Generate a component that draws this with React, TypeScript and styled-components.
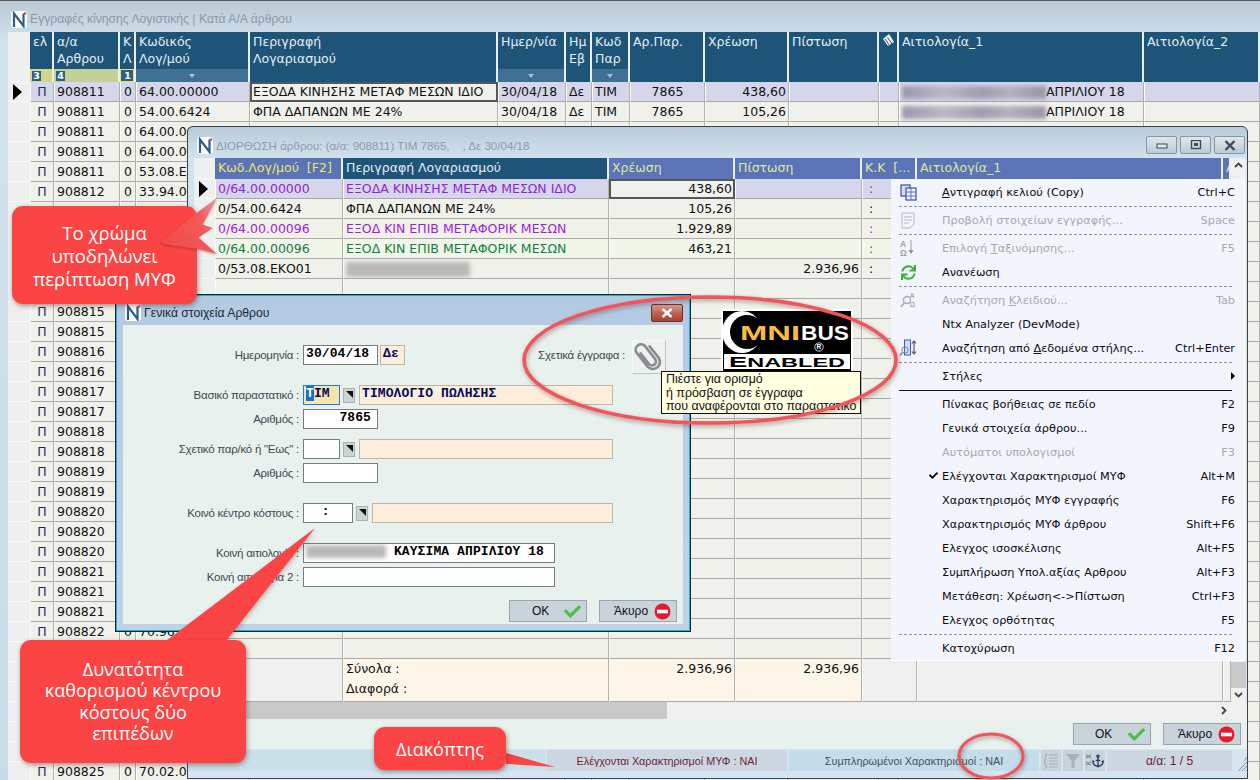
import React from "react";
import styled, { createGlobalStyle } from "styled-components";
import { FaCheck, FaSync } from "react-icons/fa";
import { Anchor } from "lucide-react";

const GRID_FONT = `"DejaVu Sans", "Liberation Sans", sans-serif`;
const LABEL_FONT = `"Liberation Sans", sans-serif`;
const MONO_FONT = `"Liberation Mono", monospace`;

const MAIN_COLS = "22px 24px 66px 16px 114px 248px 68px 26px 38px 75px 84px 90px 20px 245px 116px";
const EDIT_COLS = "21px 128px 266px 126px 127px 55px 306px 8px";

const Global = createGlobalStyle`
  html, body { margin: 0; padding: 0; background: #c9dbe9; }
  body { width: 1260px; height: 780px; overflow: hidden; font-family: ${GRID_FONT}; }
`;

const Page = styled.div`
  position: relative;
  width: 1260px;
  height: 780px;
  overflow: hidden;
  display: flex;
  flex-direction: column;
  padding-left: 8px;
  box-sizing: border-box;
  background: linear-gradient(#b9c9d6, #d2e1ee 40px, #c9dbe9);
  border-top: 1px solid #555;
`;

const TitleBar = styled.div<{ $h: number; $color: string; $left?: number; $size?: number }>`
  height: ${(p) => p.$h}px;
  display: flex;
  align-items: center;
  gap: 3px;
  flex: none;
  box-sizing: border-box;
  padding-top: 5px;
  padding-left: ${(p) => p.$left ?? 0}px;
  font-size: ${(p) => p.$size ?? 12.2}px;
  color: ${(p) => p.$color};
  white-space: pre;
  font-family: ${LABEL_FONT};
`;

const GridRow = styled.div<{ $cols: string; $h?: number }>`
  display: grid;
  grid-template-columns: ${(p) => p.$cols};
  height: ${(p) => p.$h ?? 20}px;
  flex: none;
`;

const HeadCell = styled.div<{ $bg?: string; $color?: string }>`
  position: relative;
  box-sizing: border-box;
  background: ${(p) => p.$bg ?? "#1f5479"};
  color: ${(p) => p.$color ?? "#e6edf3"};
  border-right: 2px solid #e9eeef;
  padding: 1px 0 0 3px;
  font-size: 12.5px;
  line-height: 17px;
  white-space: pre;
  overflow: hidden;
`;

const Band = styled.div<{ $bg: string; $outlined?: boolean }>`
  position: absolute;
  left: 0;
  right: 0;
  bottom: 0;
  height: 13px;
  background: ${(p) => p.$bg};
  display: flex;
  align-items: center;
  border: ${(p) => (p.$outlined ? "1px solid #e8e060" : "none")};
  box-sizing: border-box;
`;

const BandBadge = styled.span`
  width: 9px;
  height: 10px;
  margin-left: 2px;
  background: #2d5f88;
  color: #fff;
  font-size: 9.5px;
  line-height: 10px;
  font-weight: 700;
  text-align: center;
`;

const BandTick = styled.span`
  margin: 0 auto;
  width: 0;
  height: 0;
  border-left: 3px solid transparent;
  border-right: 3px solid transparent;
  border-top: 4px solid #a9c0d2;
`;

const Cell = styled.div<{ $bg?: string; $color?: string; $align?: string; $outlined?: boolean; $pl?: number }>`
  box-sizing: border-box;
  background: ${(p) => p.$bg ?? "#f0f1ea"};
  color: ${(p) => p.$color ?? "#111"};
  text-align: ${(p) => p.$align ?? "left"};
  border-right: 1px solid #b3b3ad;
  border-bottom: 1px solid #a9a9a5;
  border-left: 1px solid #fbfbf8;
  padding: 0 2px 0 ${(p) => p.$pl ?? 2}px;
  font-size: 12.5px;
  line-height: 20px;
  white-space: nowrap;
  overflow: hidden;
  outline: ${(p) => (p.$outlined ? "2px solid #55585a" : "none")};
  outline-offset: -2px;
`;

const IndicatorCell = styled.div`
  display: flex;
  align-items: center;
  padding-left: 5px;
  background: #eef0ef;
  border-bottom: 1px solid #f8f8f6;
  box-sizing: border-box;
`;

const Arrow = styled.span`
  width: 0;
  height: 0;
  border-top: 8px solid transparent;
  border-bottom: 8px solid transparent;
  border-left: 9px solid #000;
`;

const Blur = styled.span<{ $w: number; $h: number; $color?: string }>`
  display: inline-block;
  width: ${(p) => p.$w}px;
  height: ${(p) => p.$h}px;
  vertical-align: middle;
  background: ${(p) =>
    p.$color ?? "linear-gradient(90deg, #9b97ac, #bbb8c6 30%, #a09cb0 55%, #b4b1c0 75%, #98959f)"};
  filter: blur(2px);
`;

const EditWindow = styled.div`
  position: absolute;
  left: 187px;
  top: 125px;
  width: 1061px;
  height: 653px;
  box-sizing: border-box;
  border: 1px solid #3e444a;
  border-radius: 6px 6px 0 0;
  background: linear-gradient(#b9cbda, #d2e2ef 32px, #d6e5f1);
  display: flex;
  flex-direction: column;
`;

const WindowButtons = styled.div`
  margin-left: auto;
  margin-right: 2px;
  display: flex;
  gap: 3px;
`;

const WinButton = styled.div`
  width: 31px;
  height: 18px;
  box-sizing: border-box;
  border: 1px solid #8697a8;
  border-radius: 2px;
  background: linear-gradient(#dfe7ee, #bccbd8);
  display: flex;
  align-items: center;
  justify-content: center;
`;

const EditBody = styled.div`
  display: flex;
  padding-left: 6px;
  flex: none;
`;

const EditGrid = styled.div`
  width: 1037px;
  display: flex;
  flex-direction: column;
`;

const VScroll = styled.div`
  width: 15px;
  background: #f0f0f0;
  display: flex;
  flex-direction: column;
  align-items: center;
  justify-content: space-between;
  color: #444;
`;

const VThumb = styled.div`
  margin-top: auto;
  width: 15px;
  height: 26px;
  background: #c9c9c9;
`;

const ScrollGlyph = styled.svg`
  flex: none;
  margin: 4px 0;
`;

const HScroll = styled.div`
  height: 17px;
  margin-left: 6px;
  background: #f0f0f0;
  display: flex;
  align-items: center;
  justify-content: space-between;
  padding-right: 20px;
  flex: none;
`;

const HThumb = styled.div`
  width: 473px;
  height: 17px;
  background: #c9c9c9;
`;

const ActionPanel = styled.div`
  height: 30px;
  background: #e8f1ee;
  display: flex;
  justify-content: flex-end;
  align-items: center;
  gap: 12px;
  padding-right: 6px;
  flex: none;
`;

const StatusBar = styled.div`
  height: 21px;
  margin-top: 1px;
  display: flex;
  gap: 2px;
  flex: none;
  font-family: ${LABEL_FONT};
  font-size: 10.8px;
`;

const StatusBox = styled.div<{ $w: number; $bg: string; $color?: string; $size?: number }>`
  width: ${(p) => p.$w}px;
  background: ${(p) => p.$bg};
  color: ${(p) => p.$color ?? "#6d1f34"};
  font-size: ${(p) => p.$size ?? 10.8}px;
  display: flex;
  align-items: center;
  justify-content: center;
  white-space: pre;
  flex: none;
`;

const Grip = styled.div`
  flex: 1;
  background: repeating-linear-gradient(135deg, #d0e1ee 0 2px, #8a99a6 2px 3px);
  clip-path: polygon(100% 30%, 100% 100%, 30% 100%);
`;

const Menu = styled.div`
  position: absolute;
  left: 891px;
  top: 178px;
  width: 354px;
  height: 482px;
  box-sizing: border-box;
  padding-top: 1px;
  background: #f3f5fd;
  border-right: 1px solid #fff;
  border-bottom: 1px solid #fff;
  font-family: ${GRID_FONT};
`;

const MenuRow = styled.div<{ $disabled?: boolean }>`
  height: 24px;
  position: relative;
  display: flex;
  align-items: center;
  padding-left: 51px;
  padding-right: 9px;
  font-size: 11.3px;
  color: ${(p) => (p.$disabled ? "#a8a8ae" : "#0b0b14")};
  white-space: nowrap;
`;

const MenuIcon = styled.span`
  position: absolute;
  left: 8px;
  top: 3px;
  width: 18px;
  height: 18px;
  display: flex;
  align-items: center;
  justify-content: center;
`;

const MenuCheck = styled.span`
  position: absolute;
  left: 38px;
  top: 7px;
  font-size: 9px;
  line-height: 9px;
  color: #000;
`;

const Shortcut = styled.span`
  margin-left: auto;
`;

const SubArrow = styled.span`
  margin-left: auto;
  width: 0;
  height: 0;
  border-top: 4px solid transparent;
  border-bottom: 4px solid transparent;
  border-left: 4px solid #000;
`;

const MenuLine = styled.div<{ $solid?: boolean }>`
  height: 4px;
  margin: 0 12px 0 8px;
  display: flex;
  align-items: center;
  &::after {
    content: "";
    flex: 1;
    border-top: 1px ${(p) => (p.$solid ? "solid #111" : "dashed #8f8fb4")};
  }
`;

const Dialog = styled.div`
  position: absolute;
  left: 115px;
  top: 293px;
  width: 576px;
  height: 338px;
  box-sizing: border-box;
  border: 1px solid #15282f;
  box-shadow: inset 0 0 0 1px #22b0c8;
  background: linear-gradient(#b3cae2, #bcd3ea);
  padding: 0 7px 7px;
  display: flex;
  flex-direction: column;
`;

const DialogClose = styled.div`
  width: 32px;
  height: 18px;
  margin-left: auto;
  box-sizing: border-box;
  border: 1px solid #63332c;
  border-radius: 2px;
  background: linear-gradient(#d49a90, #c06452 50%, #a93f2b);
  display: flex;
  align-items: center;
  justify-content: center;
`;

const DialogBody = styled.div`
  flex: 1;
  background: #e8f1ee;
  padding-top: 20px;
  padding-right: 17px;
  display: flex;
  flex-direction: column;
`;

const FormRow = styled.div<{ $top?: number }>`
  display: flex;
  align-items: center;
  margin-top: ${(p) => p.$top ?? 0}px;
  height: 20px;
  flex: none;
`;

const FieldLabel = styled.div<{ $w?: number }>`
  width: ${(p) => p.$w ?? 180}px;
  padding-right: 4px;
  box-sizing: border-box;
  flex: none;
  text-align: right;
  font-family: ${LABEL_FONT};
  font-size: 11.5px;
  letter-spacing: -0.25px;
  color: #3d4a50;
  white-space: pre;
`;

const Field = styled.div<{
  $w: number;
  $tone?: "white" | "peach" | "focus";
  $align?: string;
  $ml?: number;
  $pr?: number;
}>`
  width: ${(p) => p.$w}px;
  height: 20px;
  margin-left: ${(p) => p.$ml ?? 0}px;
  box-sizing: border-box;
  flex: none;
  background: ${(p) => (p.$tone === "peach" ? "#fdeedc" : p.$tone === "focus" ? "#f6e3ae" : "#fff")};
  border: 1px solid ${(p) => (p.$tone === "peach" ? "#bdb6aa" : p.$tone === "focus" ? "#1b80d8" : "#7b7b7b")};
  text-align: ${(p) => p.$align ?? "left"};
  padding: 0 ${(p) => p.$pr ?? 2}px 0 2px;
  font-family: ${MONO_FONT};
  font-weight: 700;
  font-size: 13px;
  line-height: 16px;
  letter-spacing: 0.1px;
  color: ${(p) => (p.$tone === "white" || !p.$tone ? "#000" : "#000a62")};
  white-space: pre;
  overflow: hidden;
`;

const Caret = styled.span`
  background: #1173d4;
  color: #fff;
`;

const DropButton = styled.div`
  width: 12px;
  height: 15px;
  margin-left: 3px;
  margin-right: 4px;
  box-sizing: border-box;
  flex: none;
  background: #ccd5d6;
  border: 1px solid #aab2b4;
  display: flex;
  justify-content: center;
  padding-top: 2px;
  &::after {
    content: "";
    width: 0;
    height: 0;
    border-top: 7px solid #111;
    border-left: 7px solid transparent;
  }
`;

const DocsGroup = styled.div`
  margin-left: auto;
  display: flex;
  align-items: center;
  gap: 3px;
`;

const ClipButton = styled.div`
  width: 34px;
  height: 34px;
  margin: -5px 0 -9px;
  box-sizing: border-box;
  border: 1px solid #f6f8f7;
  border-right-color: #bcc4c4;
  border-bottom-color: #bcc4c4;
  background: #eef1ef;
  display: flex;
  align-items: center;
  justify-content: center;
`;

const DialogActions = styled.div`
  margin-top: 13px;
  margin-right: -11px;
  display: flex;
  justify-content: flex-end;
  gap: 12px;
`;

const ActionButton = styled.div<{ $pad: number }>`
  width: 78px;
  height: 22px;
  box-sizing: border-box;
  background: #c9d3db;
  border: 1px solid #9ba5ac;
  display: flex;
  align-items: center;
  justify-content: space-between;
  padding: 0 5px 0 ${(p) => p.$pad}px;
  font-family: ${LABEL_FONT};
  font-size: 12px;
  color: #111;
`;

const Tooltip = styled.div`
  position: absolute;
  left: 661px;
  top: 370px;
  width: 200px;
  height: 43px;
  box-sizing: border-box;
  background: #ffffe1;
  border: 1px solid #111;
  padding: 1px 0 0 4px;
  font-family: ${LABEL_FONT};
  font-size: 12.4px;
  line-height: 13.5px;
  color: #111;
  white-space: nowrap;
`;

const Callout = styled.div<{ $x: number; $y: number; $w: number; $h: number; $lh: number; $size?: number }>`
  position: absolute;
  left: ${(p) => p.$x}px;
  top: ${(p) => p.$y}px;
  width: ${(p) => p.$w}px;
  height: ${(p) => p.$h}px;
  box-sizing: border-box;
  border-radius: 11px;
  background: #fb4444;
  box-shadow: 1px 2px 5px rgba(70, 30, 30, 0.45);
  color: #fff;
  display: flex;
  align-items: center;
  justify-content: center;
  text-align: center;
  font-family: "Open Sans", "Liberation Sans", sans-serif;
  font-size: ${(p) => p.$size ?? 18}px;
  line-height: ${(p) => p.$lh}px;
`;

const Overlay = styled.svg<{ $x: number; $y: number }>`
  position: absolute;
  left: ${(p) => p.$x}px;
  top: ${(p) => p.$y}px;
  overflow: visible;
`;

const NtxLogo = () => (
  <svg width="16" height="17" viewBox="0 0 16 17">
    <rect x="0" y="0" width="16" height="17" rx="3" fill="#fff" />
    <path d="M3 16V2.5L12.5 15V2.5" fill="none" stroke="#2c5d88" strokeWidth="2.2" />
    <circle cx="14" cy="2.5" r="1.2" fill="#e23a3a" />
  </svg>
);

const CancelIcon = () => (
  <svg width="17" height="17" viewBox="0 0 17 17">
    <circle cx="8.5" cy="8.5" r="8" fill="#e8192c" />
    <rect x="3" y="6.7" width="11" height="3.6" fill="#fff" />
  </svg>
);

const OkIcon = () => <FaCheck size={17} color="#4fbf45" />;

const ClipIcon = () => (
  <svg width="30" height="32" viewBox="0 0 32 36">
    <g transform="rotate(-38 16 18)">
      <path
        d="M11 9v15a4.5 4.5 0 0 0 9 0V6a6 6 0 0 0-12 0v19a8 8 0 0 0 16 0V9"
        fill="none"
        stroke="#868d90"
        strokeWidth="3"
        strokeLinecap="round"
      />
    </g>
  </svg>
);

const HeaderPageIcon = () => (
  <svg width="13" height="14" viewBox="0 0 13 14">
    <path d="M1 6L7 1l5 8-6 4z" fill="#f4f6f8" />
    <path d="M3 6l5 7M5.5 4.5l5 7" stroke="#1f5479" strokeWidth="1" />
  </svg>
);

const CopyIcon = () => (
  <svg width="17" height="17" viewBox="0 0 17 17">
    <rect x="1" y="1" width="9" height="11" fill="#d6def5" stroke="#1b2a9c" />
    <rect x="6" y="4" width="10" height="12" fill="#eef3ff" stroke="#1b2a9c" />
    <path d="M6 8h10M6 12h10M11 4v12" stroke="#5d78c8" />
  </svg>
);

const DocIcon = () => (
  <svg width="15" height="17" viewBox="0 0 15 17">
    <path d="M1 1h12v11l-4 4H1z" fill="none" stroke="#b6b9bf" />
    <path d="M3 5h8M3 8h8M3 11h5" stroke="#b6b9bf" />
  </svg>
);

const SortIcon = () => (
  <svg width="16" height="18" viewBox="0 0 16 18">
    <text x="0" y="8" fontSize="8.5" fontWeight="700" fill="#9a9ea6" fontFamily="Liberation Sans">A</text>
    <text x="0" y="17" fontSize="8.5" fontWeight="700" fill="#9a9ea6" fontFamily="Liberation Sans">Ω</text>
    <path d="M11 1v11" stroke="#9a9ea6" />
    <path d="M8.5 11h5L11 15z" fill="#8a8e96" />
  </svg>
);

const KeyIcon = () => (
  <svg width="17" height="18" viewBox="0 0 17 18">
    <circle cx="7" cy="9" r="3.5" fill="none" stroke="#a8abb0" strokeWidth="1.4" />
    <path d="M4.5 11.5L1 16" stroke="#a8abb0" strokeWidth="1.6" />
    <text x="9.5" y="7" fontSize="7" fontWeight="700" fill="#a8abb0" fontFamily="Liberation Sans">A</text>
    <text x="9.5" y="16" fontSize="7" fontWeight="700" fill="#a8abb0" fontFamily="Liberation Sans">Ω</text>
  </svg>
);

const ColumnSearchIcon = () => (
  <svg width="18" height="18" viewBox="0 0 18 18">
    <rect x="5.5" y="1" width="6" height="15" fill="#d5def8" stroke="#3c5cd0" />
    <circle cx="6" cy="11" r="3.2" fill="none" stroke="#7a7f86" />
    <path d="M3.5 13.5L1 16.5" stroke="#7a7f86" strokeWidth="1.4" />
    <path d="M15 2v13M13 4.5l2-2.5 2 2.5M13 12.5l2 2.5 2-2.5" fill="none" stroke="#555b66" strokeWidth="1.2" />
  </svg>
);

const ListIcon = () => (
  <svg width="18" height="16" viewBox="0 0 18 16">
    <path d="M5 1C2 4 2 12 5 15" fill="none" stroke="#a8b2b8" strokeWidth="1.4" />
    <path d="M7 2h9M7 5h9M7 8h9M7 11h9M7 14h9" stroke="#a8b2b8" />
  </svg>
);

const FunnelIcon = () => (
  <svg width="16" height="16" viewBox="0 0 16 16">
    <path d="M1 1h14L9.5 8v7h-3V8z" fill="#a8b2b8" />
  </svg>
);

const AnchorStatus = () => (
  <svg width="20" height="18" viewBox="0 0 20 18">
    <path d="M1 3l5 3M6 3L1 6M1 10l5 3M6 10l-5 3" stroke="#7f8890" strokeWidth="1.2" />
    <foreignObject x="6" y="2" width="14" height="15">
      <Anchor size={14} color="#26336f" strokeWidth={2.2} />
    </foreignObject>
  </svg>
);

const OmnibusLogo = () => (
  <Overlay $x={721} $y={308} width="132" height="64" viewBox="0 0 132 64">
    <rect x="0" y="0" width="132" height="64" fill="#fff" />
    <rect x="2" y="2" width="128" height="60" fill="#000" />
    <ellipse cx="21" cy="23" rx="20" ry="21" fill="#fff" />
    <ellipse cx="26" cy="23" rx="17" ry="17" fill="#000" />
    <text x="19" y="31" fontSize="20" fontWeight="700" fill="#f7bd3e" fontFamily="Liberation Sans" textLength="60" lengthAdjust="spacingAndGlyphs">MNI</text>
    <text x="80" y="31" fontSize="20" fontWeight="700" fill="#fff" fontFamily="Liberation Sans" textLength="48" lengthAdjust="spacingAndGlyphs">BUS</text>
    <circle cx="98" cy="38" r="4.2" fill="none" stroke="#fff" strokeWidth="0.8" />
    <text x="95.6" y="40.4" fontSize="6.5" fontWeight="700" fill="#fff" fontFamily="Liberation Sans">R</text>
    <rect x="3" y="45" width="126" height="15" fill="#fff" />
    <text x="8" y="57.5" fontSize="12" fontWeight="700" fill="#000" fontFamily="Liberation Sans" textLength="116" lengthAdjust="spacingAndGlyphs">
      <tspan fontSize="14">E</tspan>NABLED
    </text>
  </Overlay>
);

const MAIN_HEAD: { text: string; band?: React.ReactNode; icon?: React.ReactNode }[] = [
  { text: "" },
  { text: "ελ", band: <Band $bg="#d3d68c"><BandBadge>3</BandBadge></Band> },
  { text: "α/α\nΑρθρου", band: <Band $bg="#c1d19a"><BandBadge>4</BandBadge></Band> },
  { text: "Κ\nΛ", band: <Band $bg="#2d5f88" $outlined><BandBadge>1</BandBadge></Band> },
  { text: "Κωδικός\nΛογ/μού", band: <Band $bg="#3f7094"><BandTick /></Band> },
  { text: "Περιγραφή\nΛογαριασμού" },
  { text: "Ημερ/νία", band: <Band $bg="#3f7094"><BandTick /></Band> },
  { text: "Ημ\nΕβ" },
  { text: "Κωδ\nΠαρ", band: <Band $bg="#3f7094"><BandTick /></Band> },
  { text: "Αρ.Παρ." },
  { text: "Χρέωση" },
  { text: "Πίστωση" },
  { text: "", icon: <HeaderPageIcon /> },
  { text: "Αιτιολογία_1" },
  { text: "Αιτιολογία_2" },
];

// hidden rows (behind the callouts and the dialog) stay blank
const ROW_IDS = [
  "908811", "908811", "908811", "908811", "908811", "908812", "", "", "", "", "",
  "908815", "908815", "908816", "908816", "908817", "908817", "908818", "908818", "908819", "908819", "908820",
  "908820", "908820", "908821", "908821", "908821", "908822", "", "", "", "", "",
  "", "908825",
];

const rowCode = (i: number) => {
  if (i === 0 || i === 2) return "64.00.00000";
  if (i === 1) return "54.00.6424";
  if (i === 3) return "64.00.00096";
  if (i === 4) return "53.08.ΕΚΟ01";
  if (i === 5) return "33.94.00000";
  if (i === 27) return "70.96.00000";
  return i === 34 ? "70.02.00000" : "";
};

const EDIT_ROWS = [
  { code: "0/64.00.00000", name: "ΕΞΟΔΑ ΚΙΝΗΣΗΣ ΜΕΤΑΦ ΜΕΣΩΝ ΙΔΙΟ", debit: "438,60", credit: "", color: "#8f1fd8", bg: "#d5d6ea" },
  { code: "0/54.00.6424", name: "ΦΠΑ ΔΑΠΑΝΩΝ ΜΕ 24%", debit: "105,26", credit: "", color: "#111", bg: "#f0f1ea" },
  { code: "0/64.00.00096", name: "ΕΞΟΔ ΚΙΝ ΕΠΙΒ ΜΕΤΑΦΟΡΙΚ ΜΕΣΩΝ", debit: "1.929,89", credit: "", color: "#9a1fe0", bg: "#f1f1e8" },
  { code: "0/64.00.00096", name: "ΕΞΟΔ ΚΙΝ ΕΠΙΒ ΜΕΤΑΦΟΡΙΚ ΜΕΣΩΝ", debit: "463,21", credit: "", color: "#0f8040", bg: "#f0f6ea" },
  { code: "0/53.08.ΕΚΟ01", name: "", debit: "", credit: "2.936,96", color: "#111", bg: "#f0f1ea" },
];

type MenuEntry =
  | { line: "dash" | "solid" }
  | {
      label: React.ReactNode;
      key?: string;
      disabled?: boolean;
      icon?: React.ReactNode;
      checked?: boolean;
      sub?: boolean;
    };

const MENU: MenuEntry[] = [
  { label: <><u>Α</u>ντιγραφή κελιού (Copy)</>, key: "Ctrl+C", icon: <CopyIcon /> },
  { line: "dash" },
  { label: "Προβολή στοιχείων εγγραφής...", key: "Space", disabled: true, icon: <DocIcon /> },
  { line: "dash" },
  { label: <>Επιλογή <u>Τ</u>αξινόμησης...</>, key: "F5", disabled: true, icon: <SortIcon /> },
  { label: "Ανανέωση", icon: <FaSync size={15} color="#3fae3a" /> },
  { line: "dash" },
  { label: <>Αναζήτηση <u>Κ</u>λειδιού...</>, key: "Tab", disabled: true, icon: <KeyIcon /> },
  { label: "Ntx Analyzer (DevMode)" },
  { label: <>Αναζήτηση από <u>Δ</u>εδομένα στήλης...</>, key: "Ctrl+Enter", icon: <ColumnSearchIcon /> },
  { line: "dash" },
  { label: "Στήλες", sub: true },
  { line: "solid" },
  { label: "Πίνακας βοήθειας σε πεδίο", key: "F2" },
  { label: "Γενικά στοιχεία άρθρου...", key: "F9" },
  { label: "Αυτόματοι υπολογισμοί", key: "F3", disabled: true },
  { label: "Ελέγχονται Χαρακτηρισμοί ΜΥΦ", key: "Alt+M", checked: true },
  { label: "Χαρακτηρισμός ΜΥΦ εγγραφής", key: "F6" },
  { label: "Χαρακτηρισμός ΜΥΦ άρθρου", key: "Shift+F6" },
  { label: "Ελεγχος ισοσκέλισης", key: "Alt+F5" },
  { label: "Συμπλήρωση Υπολ.αξίας Αρθρου", key: "Alt+F3" },
  { label: "Μετάθεση: Χρέωση<->Πίστωση", key: "Ctrl+F3" },
  { label: "Ελεγχος ορθότητας", key: "F5" },
  { line: "dash" },
  { label: "Κατοχύρωση", key: "F12" },
];

const MainGrid = () => (
  <>
    <GridRow $cols={MAIN_COLS} $h={50}>
      {MAIN_HEAD.map((h, i) =>
        i === 0 ? (
          <IndicatorCell key={i} />
        ) : (
          <HeadCell key={i}>
            {h.text}
            {h.icon}
            {h.band}
          </HeadCell>
        )
      )}
    </GridRow>
    {ROW_IDS.map((id, i) => {
      const bg = i === 0 ? "#d5d6ea" : undefined;
      return (
        <GridRow $cols={MAIN_COLS} key={i}>
          <IndicatorCell>{i === 0 && <Arrow />}</IndicatorCell>
          <Cell $bg={bg} $align="center" $color="#1c2c58">{id ? "Π" : ""}</Cell>
          <Cell $bg={bg}>{id}</Cell>
          <Cell $bg={bg} $align="center">{id ? "0" : ""}</Cell>
          <Cell $bg={bg}>{rowCode(i)}</Cell>
          <Cell $bg={i === 0 ? "#f0f1ea" : undefined} $outlined={i === 0}>
            {i === 0 ? "ΕΞΟΔΑ ΚΙΝΗΣΗΣ ΜΕΤΑΦ ΜΕΣΩΝ ΙΔΙΟ" : i === 1 ? "ΦΠΑ ΔΑΠΑΝΩΝ ΜΕ 24%" : ""}
          </Cell>
          <Cell $bg={bg}>{i < 2 ? "30/04/18" : ""}</Cell>
          <Cell $bg={bg}>{i < 2 ? "Δε" : ""}</Cell>
          <Cell $bg={bg}>{i < 2 ? "ΤΙΜ" : ""}</Cell>
          <Cell $bg={bg} $align="center">{i < 2 ? "7865" : ""}</Cell>
          <Cell $bg={bg} $align="right">{i === 0 ? "438,60" : i === 1 ? "105,26" : ""}</Cell>
          <Cell $bg={bg} />
          <Cell $bg={bg} />
          <Cell $bg={bg}>
            {i < 2 && (
              <>
                <Blur $w={144} $h={13} />
                ΑΠΡΙΛΙΟΥ 18
              </>
            )}
          </Cell>
          <Cell $bg={bg} />
        </GridRow>
      );
    })}
  </>
);

const EditTable = () => (
  <EditGrid>
    <GridRow $cols={EDIT_COLS} $h={21}>
      <IndicatorCell />
      <HeadCell $bg="#5b74b8" $color="#e9e66c">{"Κωδ.Λογ/μού  [F2]"}</HeadCell>
      <HeadCell>Περιγραφή Λογαριασμού</HeadCell>
      <HeadCell $bg="#5b74b8" $color="#dbe89a">Χρέωση</HeadCell>
      <HeadCell $bg="#5b74b8" $color="#dbe89a">Πίστωση</HeadCell>
      <HeadCell $bg="#5b74b8" $color="#dbe89a">{"Κ.Κ  [..."}</HeadCell>
      <HeadCell $bg="#5b74b8" $color="#dbe89a">Αιτιολογία_1</HeadCell>
      <HeadCell $bg="#5b74b8" $color="#dbe89a">Α</HeadCell>
    </GridRow>
    {Array.from({ length: 24 }, (_, i) => {
      const r = EDIT_ROWS[i];
      return (
        <GridRow $cols={EDIT_COLS} key={i}>
          <IndicatorCell>{i === 0 && <Arrow />}</IndicatorCell>
          <Cell $bg={r?.bg} $color={r?.color}>{r?.code}</Cell>
          <Cell $bg={r?.bg} $color={r?.color}>
            {r?.name}
            {i === 4 && <Blur $w={124} $h={15} $color="#b9b9b6" />}
          </Cell>
          <Cell $bg={i === 0 ? "#f0f1ea" : r?.bg} $align="right" $outlined={i === 0}>{r?.debit}</Cell>
          <Cell $bg={r?.bg} $align="right">{r?.credit}</Cell>
          <Cell $bg={r?.bg} $color={r?.color} $pl={6}>{r ? ":" : ""}</Cell>
          <Cell $bg={r?.bg} />
          <Cell $bg={r?.bg} />
        </GridRow>
      );
    })}
    <GridRow $cols={EDIT_COLS} $h={43}>
      <IndicatorCell />
      <Cell $bg="#f0f0f0" />
      <Cell $bg="#fdf6e8">
        Σύνολα :
        <br />
        Διαφορά :
      </Cell>
      <Cell $bg="#fdf6e8" $align="right">2.936,96</Cell>
      <Cell $bg="#fdf6e8" $align="right">2.936,96</Cell>
      <Cell $bg="#f0f0f0" />
      <Cell $bg="#f0f0f0" />
      <Cell $bg="#f0f0f0" />
    </GridRow>
  </EditGrid>
);

const Form = () => (
  <DialogBody>
    <FormRow>
      <FieldLabel>Ημερομηνία :</FieldLabel>
      <Field $w={75}>30/04/18</Field>
      <Field $w={25} $tone="peach" $ml={2}>Δε</Field>
      <DocsGroup>
        <FieldLabel $w={110}>Σχετικά έγγραφα :</FieldLabel>
        <ClipButton>
          <ClipIcon />
        </ClipButton>
      </DocsGroup>
    </FormRow>
    <FormRow $top={20}>
      <FieldLabel>Βασικό παραστατικό :</FieldLabel>
      <Field $w={37} $tone="focus"><Caret>Τ</Caret>ΙΜ</Field>
      <DropButton />
      <Field $w={254} $tone="peach">ΤΙΜΟΛΟΓΙΟ ΠΩΛΗΣΗΣ</Field>
    </FormRow>
    <FormRow $top={4}>
      <FieldLabel>Αριθμός :</FieldLabel>
      <Field $w={75} $align="right" $pr={6}>7865</Field>
    </FormRow>
    <FormRow $top={10}>
      <FieldLabel>{'Σχετικό παρ/κό ή "Εως" :'}</FieldLabel>
      <Field $w={37} />
      <DropButton />
      <Field $w={254} $tone="peach" />
    </FormRow>
    <FormRow $top={4}>
      <FieldLabel>Αριθμός :</FieldLabel>
      <Field $w={75} />
    </FormRow>
    <FormRow $top={20}>
      <FieldLabel>Κοινό κέντρο κόστους :</FieldLabel>
      <Field $w={50}>{"  :"}</Field>
      <DropButton />
      <Field $w={241} $tone="peach" />
    </FormRow>
    <FormRow $top={20}>
      <FieldLabel>Κοινή αιτιολογία :</FieldLabel>
      <Field $w={252}>
        <Blur $w={80} $h={13} $color="#b9b9bb" />
        {" ΚΑΥΣΙΜΑ ΑΠΡΙΛΙΟΥ 18"}
      </Field>
    </FormRow>
    <FormRow $top={4}>
      <FieldLabel>Κοινή αιτιολογία 2 :</FieldLabel>
      <Field $w={252} />
    </FormRow>
    <DialogActions>
      <ActionButton $pad={22}>OK<OkIcon /></ActionButton>
      <ActionButton $pad={14}>Άκυρο<CancelIcon /></ActionButton>
    </DialogActions>
  </DialogBody>
);

export default function App() {
  return (
    <Page>
      <Global />
      <TitleBar $h={31} $color="#8c9aa6" $left={3}>
        <NtxLogo />
        Εγγραφές κίνησης Λογιστικής | Κατά Α/Α άρθρου
      </TitleBar>
      <MainGrid />

      <EditWindow>
        <TitleBar $h={31} $color="#8f9ca8" $left={9} $size={11.6}>
          <NtxLogo />
          {"ΔΙΟΡΘΩΣΗ άρθρου: (α/α: 908811) ΤΙΜ 7865,    , Δε 30/04/18"}
          <WindowButtons>
            <WinButton>
              <svg width="12" height="8" viewBox="0 0 12 8"><rect x="1" y="3" width="10" height="4" fill="#dfe6ec" stroke="#3a4a58" /></svg>
            </WinButton>
            <WinButton>
              <svg width="12" height="10" viewBox="0 0 12 10"><rect x="1.5" y="0.5" width="9" height="8" fill="none" stroke="#3a4a58" strokeWidth="1.4" /><rect x="4" y="3" width="4" height="3" fill="#3a4a58" /></svg>
            </WinButton>
            <WinButton>
              <svg width="12" height="11" viewBox="0 0 12 11"><path d="M1.5 1l9 9M10.5 1l-9 9" stroke="#3a4a58" strokeWidth="2.4" /></svg>
            </WinButton>
          </WindowButtons>
        </TitleBar>
        <EditBody>
          <EditTable />
          <VScroll>
            <ScrollGlyph width="9" height="6" viewBox="0 0 9 6"><path d="M1 5l3.5-3.5L8 5" fill="none" stroke="#444" strokeWidth="1.8" /></ScrollGlyph>
            <VThumb />
            <ScrollGlyph width="9" height="6" viewBox="0 0 9 6"><path d="M1 1l3.5 3.5L8 1" fill="none" stroke="#444" strokeWidth="1.8" /></ScrollGlyph>
          </VScroll>
        </EditBody>
        <HScroll>
          <HThumb />
          <ScrollGlyph width="6" height="9" viewBox="0 0 6 9"><path d="M1 1l3.5 3.5L1 8" fill="none" stroke="#444" strokeWidth="1.8" /></ScrollGlyph>
        </HScroll>
        <ActionPanel>
          <ActionButton $pad={21}>OK<OkIcon /></ActionButton>
          <ActionButton $pad={14}>Άκυρο<CancelIcon /></ActionButton>
        </ActionPanel>
        <StatusBar>
          <StatusBox $w={357} $bg="#cbdfe9" />
          <StatusBox $w={240} $bg="#cdd7e2">Ελέγχονται Χαρακτηρισμοί ΜΥΦ : ΝΑΙ</StatusBox>
          <StatusBox $w={250} $bg="#c4dde9" $color="#44515c">Συμπληρωμένοι Χαρακτηρισμοί : ΝΑΙ</StatusBox>
          <StatusBox $w={20} $bg="#c8d4dc"><ListIcon /></StatusBox>
          <StatusBox $w={20} $bg="#c8d4dc"><FunnelIcon /></StatusBox>
          <StatusBox $w={20} $bg="#c8d4dc"><AnchorStatus /></StatusBox>
          <StatusBox $w={125} $bg="#cdd7e2" $size={12}>α/α: 1 / 5</StatusBox>
          <Grip />
        </StatusBar>
      </EditWindow>

      <Menu>
        {MENU.map((m, i) =>
          "line" in m ? (
            <MenuLine key={i} $solid={m.line === "solid"} />
          ) : (
            <MenuRow key={i} $disabled={m.disabled}>
              {m.icon && <MenuIcon>{m.icon}</MenuIcon>}
              {m.checked && <MenuCheck><FaCheck /></MenuCheck>}
              <span>{m.label}</span>
              {m.key && <Shortcut>{m.key}</Shortcut>}
              {m.sub && <SubArrow />}
            </MenuRow>
          )
        )}
      </Menu>

      <Dialog>
        <TitleBar $h={30} $color="#1c2830" $left={2}>
          <NtxLogo />
          Γενικά στοιχεία Αρθρου
          <DialogClose>
            <svg width="12" height="10" viewBox="0 0 12 10"><path d="M1.5 1l9 8M10.5 1l-9 8" stroke="#fff" strokeWidth="2.4" /></svg>
          </DialogClose>
        </TitleBar>
        <Form />
      </Dialog>

      <OmnibusLogo />
      <Tooltip>
        Πιέστε για ορισμό
        <br />
        ή πρόσβαση σε έγγραφα
        <br />
        που αναφέρονται στο παραστατικό
      </Tooltip>

      <Overlay $x={0} $y={0} width="1260" height="780" viewBox="0 0 1260 780" pointerEvents="none">
        <defs>
          <linearGradient id="tailFade" gradientUnits="userSpaceOnUse" x1="165" y1="240" x2="220" y2="220">
            <stop offset="0" stopColor="#f24a4a" />
            <stop offset="0.7" stopColor="#f25a5a" />
            <stop offset="1" stopColor="#e39090" />
          </linearGradient>
        </defs>
        <ellipse cx="710" cy="359" rx="186" ry="63" fill="none" stroke="#f2545a" strokeWidth="3.5" style={{ filter: "drop-shadow(1px 2px 2px rgba(80,40,40,.45))" }} />
        <ellipse cx="991" cy="755" rx="32" ry="22" fill="none" stroke="#f2545a" strokeWidth="3" style={{ filter: "drop-shadow(1px 2px 2px rgba(80,40,40,.45))" }} />
        <path d="M166 640L315 527L226 640z" fill="#fb4444" style={{ filter: "drop-shadow(1px 2px 2px rgba(80,40,40,.3))" }} />
        <path d="M506 752L555 766L506 763z" fill="#fb4444" />
      </Overlay>

      <Callout $x={12} $y={205} $w={185} $h={98} $lh={23} $size={18.5}>
        Το χρώμα
        <br />
        υποδηλώνει
        <br />
        περίπτωση ΜΥΦ
      </Callout>
      <Overlay $x={0} $y={0} width="260" height="300" viewBox="0 0 260 300" pointerEvents="none">
        <path d="M160 241L198 211L217 197L198 232L165 244z" fill="url(#tailFade)" style={{ filter: "drop-shadow(0 1px 1px rgba(80,30,30,.35))" }} />
        <path d="M165 238L198 222L213 227L198 237L165 244z" fill="url(#tailFade)" />
        <path d="M162 243L198 236L217 253L198 248z" fill="url(#tailFade)" style={{ filter: "drop-shadow(0 1px 1px rgba(80,30,30,.35))" }} />
      </Overlay>
      <Callout $x={20} $y={639} $w={226} $h={123} $lh={21.5}>
        Δυνατότητα
        <br />
        καθορισμού κέντρου
        <br />
        κόστους δύο
        <br />
        επιπέδων
      </Callout>
      <Callout $x={374} $y={726} $w={132} $h={43} $lh={22}>
        Διακόπτης
      </Callout>
    </Page>
  );
}
